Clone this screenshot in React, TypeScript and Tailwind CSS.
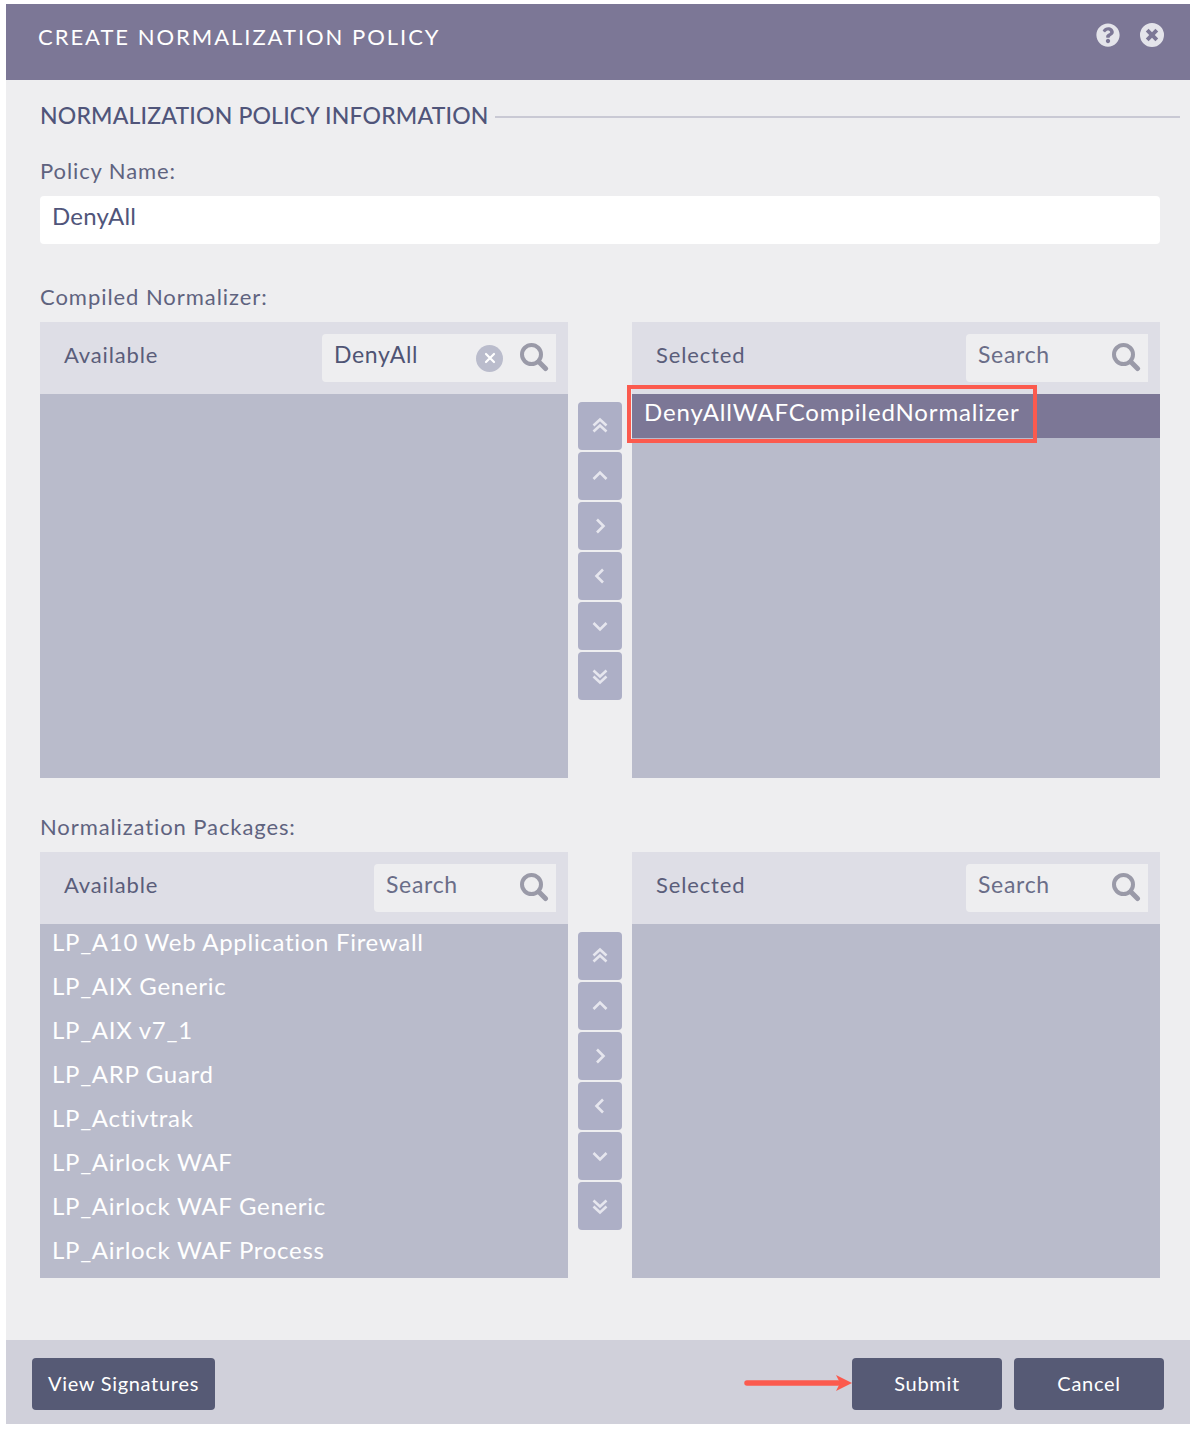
import { FaQuestionCircle } from "react-icons/fa";

const packages = [
  "LP_A10 Web Application Firewall",
  "LP_AIX Generic",
  "LP_AIX v7_1",
  "LP_ARP Guard",
  "LP_Activtrak",
  "LP_Airlock WAF",
  "LP_Airlock WAF Generic",
  "LP_Airlock WAF Process",
];

// chevrons drawn by hand, the ones in the icon packs are too thin and too tall here
const moveIcons = [
  "M2.5 8.5L9 2.5L15.5 8.5M2.5 14.5L9 8.5L15.5 14.5",
  "M2.5 12L9 5.5L15.5 12",
  "M6 2.5L12.5 9L6 15.5",
  "M12 2.5L5.5 9L12 15.5",
  "M2.5 6L9 12.5L15.5 6",
  "M2.5 3.5L9 9.5L15.5 3.5M2.5 9.5L9 15.5L15.5 9.5",
];

function CloseCircle({ className }: { className: string }) {
  return (
    <svg viewBox="0 0 24 24" className={className}>
      <path
        fillRule="evenodd"
        fill="currentColor"
        d="M12 0a12 12 0 1 1 0 24a12 12 0 1 1 0-24ZM8.6 5.8L5.8 8.6L9.2 12L5.8 15.4L8.6 18.2L12 14.8L15.4 18.2L18.2 15.4L14.8 12L18.2 8.6L15.4 5.8L12 9.2Z"
      />
    </svg>
  );
}

function SearchBox({ value, wide }: { value?: string; wide?: boolean }) {
  return (
    <div className={`flex h-12 items-center rounded-l bg-[#eeeef0] ${wide ? "w-[234px]" : "w-[182px]"}`}>
      <span className={`flex-1 pl-3 pb-2 text-[23px] tracking-[0.7px] ${value ? "text-[#4f5474]" : "text-[#6a6d88]"}`}>{value ?? "Search"}</span>
      {value && (
        <span className="mr-4 flex h-[27px] w-[27px] items-center justify-center rounded-full bg-[#babccc]">
          <svg viewBox="0 0 12 12" className="h-3 w-3 text-white">
            <path d="M2 2L10 10M10 2L2 10" stroke="currentColor" strokeWidth="2.2" strokeLinecap="round" />
          </svg>
        </span>
      )}
      <svg viewBox="0 0 30 30" className="mr-[7px] mb-[2px] h-[30px] w-[30px] text-[#9a9aa8]" fill="none" stroke="currentColor">
        <circle cx="12.5" cy="12.5" r="9.5" strokeWidth="4" />
        <path d="M20 20L26.5 26.5" strokeWidth="5" strokeLinecap="round" />
      </svg>
    </div>
  );
}

function MoveButtons() {
  return (
    <div className="flex w-16 flex-col items-center gap-[2px] pt-[80px]">
      {moveIcons.map((d) => (
        <div key={d} className="flex h-12 w-11 items-center justify-center rounded bg-[#adafc6] text-[#e6e6ee]">
          <svg viewBox="0 0 18 18" className="h-[18px] w-[18px]" fill="none" stroke="currentColor" strokeWidth="2.6">
            <path d={d} />
          </svg>
        </div>
      ))}
    </div>
  );
}

function ListPanel({ title, search, wide, children }: { title: string; search?: string; wide?: boolean; children?: React.ReactNode }) {
  return (
    <div className="flex w-[528px] flex-col bg-[#b9bbcb]">
      <div className="flex h-[72px] shrink-0 items-center justify-between bg-[#dedee6] pl-6 pr-3">
        <span className="pb-2 text-[22px] tracking-[0.85px] text-[#5a5d7a]">{title}</span>
        <SearchBox value={search} wide={wide} />
      </div>
      {children}
    </div>
  );
}

export default function App() {
  return (
    <div className="h-[1430px] bg-white pt-1 pl-[6px] font-['Lato',sans-serif]">
      <div className="flex h-[1420px] w-[1184px] flex-col bg-[#eeeef0]">
        <div className="flex h-[76px] shrink-0 items-center justify-between bg-[#7c7796] pl-8 pr-[26px]">
          <span className="pb-3 text-[22px] tracking-[1.97px] text-white">CREATE NORMALIZATION POLICY</span>
          <div className="flex items-center gap-5 pb-[14px] text-[#e4e4ea]">
            <FaQuestionCircle size={24} />
            <CloseCircle className="h-6 w-6" />
          </div>
        </div>

        <div className="flex-1 pl-[34px]">
          <div className="flex items-center gap-[6px] pt-[20px] pr-[10px]">
            <span className="text-[23px] leading-[30px] font-medium tracking-[0.17px] text-[#50557a]">NORMALIZATION POLICY INFORMATION</span>
            <div className="mt-1 h-[2px] flex-1 bg-[#c9c9d4]" />
          </div>
          <div className="mt-[26px] text-[22px] leading-[30px] tracking-[0.9px] text-[#5f637f]">Policy Name:</div>
          <div className="mt-[10px] flex h-12 w-[1120px] items-center rounded bg-white pb-2 pl-3 text-[24px] tracking-[0.2px] text-[#50557a]">DenyAll</div>

          <div className="mt-[38px] text-[22px] leading-[30px] tracking-[0.95px] text-[#5f637f]">Compiled Normalizer:</div>
          <div className="mt-[10px] flex h-[456px]">
            <ListPanel title="Available" search="DenyAll" wide />
            <MoveButtons />
            <ListPanel title="Selected">
              <div className="relative flex h-11 items-center bg-[#7c7796] pb-[9px] pl-3 text-[24px] tracking-[0.86px] text-white">
                DenyAllWAFCompiledNormalizer
                <div className="absolute top-[-9px] left-[-5px] h-[58px] w-[410px] border-4 border-[#fb5a4e]" />
              </div>
            </ListPanel>
          </div>

          <div className="mt-[34px] text-[22px] leading-[30px] tracking-[0.9px] text-[#5f637f]">Normalization Packages:</div>
          <div className="mt-[10px] flex h-[426px]">
            <ListPanel title="Available">
              <div className="flex flex-col">
                {packages.map((name) => (
                  <div key={name} className="flex h-11 items-center pb-2 pl-3 text-[24px] tracking-[0.7px] text-white">
                    {name}
                  </div>
                ))}
              </div>
            </ListPanel>
            <MoveButtons />
            <ListPanel title="Selected" />
          </div>
        </div>

        <div className="flex h-[84px] shrink-0 items-start justify-between bg-[#d0d0da] px-[26px] pt-[18px]">
          <button className="h-[52px] w-[183px] rounded bg-[#565a75] pb-[2px] text-[20px] tracking-[0.7px] text-white">View Signatures</button>
          <div className="flex items-center gap-3">
            <svg viewBox="0 0 110 16" className="mr-[-12px] mb-[2px] h-4 w-[110px] text-[#fb5a4e]">
              <path d="M5 8H96" stroke="currentColor" strokeWidth="5.5" strokeLinecap="round" />
              <path d="M94 0L110 8L94 16L98 8Z" fill="currentColor" />
            </svg>
            <button className="h-[52px] w-[150px] rounded bg-[#565a75] pb-[2px] text-[20px] tracking-[0.7px] text-white">Submit</button>
            <button className="h-[52px] w-[150px] rounded bg-[#565a75] pb-[2px] text-[20px] tracking-[0.7px] text-white">Cancel</button>
          </div>
        </div>
      </div>
    </div>
  );
}
